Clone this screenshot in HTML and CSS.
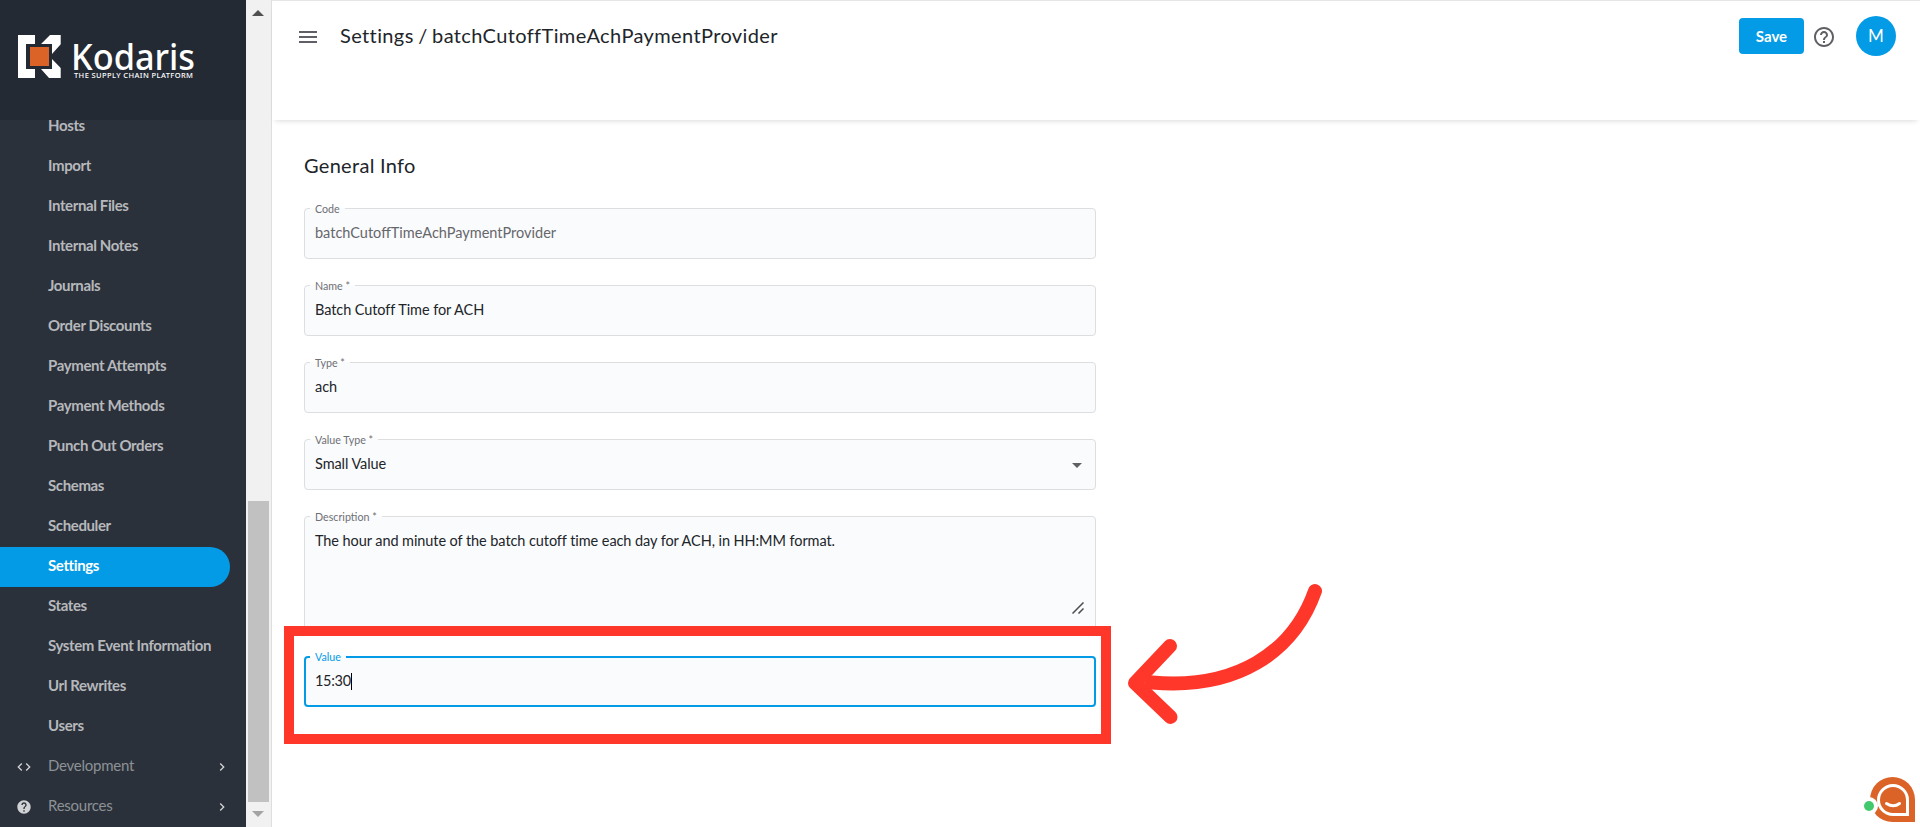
FILE: index.html
```
<!DOCTYPE html>
<html lang="en">
  <head>
    <meta charset="UTF-8" />
    <meta name="viewport" content="width=device-width, initial-scale=1.0" />
    <title>Settings / batchCutoffTimeAchPaymentProvider</title>
    <link rel="stylesheet" href="styles.css">
  </head>
  <body>
    <aside class="sidebar">
      <div class="brand">
        <svg class="logo" width="200" height="60" viewBox="0 0 200 60">
          <path fill="#fff" d="M0 2h17v9H8v25h9v9H0zM32 2h10.700v9.300L34 21v-10H23zM34 26l8.700 9V45H31L23 36h11z" />
          <path fill="#dc6328" d="M12 14h19v19H12z" />
          <text class="logo-name" x="53" y="36.500" textLength="124" lengthAdjust="spacingAndGlyphs">Kodaris</text>
          <text class="logo-tag" x="56" y="45" textLength="119">THE SUPPLY CHAIN PLATFORM</text>
        </svg>
      </div>
      <nav class="menu">
        <a href="#">Hosts</a>
        <a href="#">Import</a>
        <a href="#">Internal Files</a>
        <a href="#">Internal Notes</a>
        <a href="#">Journals</a>
        <a href="#">Order Discounts</a>
        <a href="#">Payment Attempts</a>
        <a href="#">Payment Methods</a>
        <a href="#">Punch Out Orders</a>
        <a href="#">Schemas</a>
        <a href="#">Scheduler</a>
        <a href="#" class="active">Settings</a>
        <a href="#">States</a>
        <a href="#">System Event Information</a>
        <a href="#">Url Rewrites</a>
        <a href="#">Users</a>
        <a href="#" class="group">
          <svg class="group-icon" width="16" height="16" viewBox="0 0 24 24"><path d="M9.400 16.600 4.800 12l4.600-4.600L8 6l-6 6 6 6 1.400-1.400zm5.200 0 4.600-4.600-4.600-4.600L16 6l6 6-6 6-1.400-1.400z" /></svg>
          <span>Development</span>
          <svg class="chevron" width="16" height="16" viewBox="0 0 24 24"><path d="M10 6 8.590 7.410 13.170 12l-4.580 4.590L10 18l6-6z" /></svg>
        </a>
        <a href="#" class="group">
          <svg class="group-icon" width="16" height="16" viewBox="0 0 24 24"><path d="M12 2C6.480 2 2 6.480 2 12s4.480 10 10 10 10-4.480 10-10S17.520 2 12 2zm1 17h-2v-2h2v2zm2.070-7.750-.9.920C13.450 12.900 13 13.500 13 15h-2v-.5c0-1.100.45-2.100 1.170-2.830l1.240-1.260c.37-.36.59-.86.59-1.410 0-1.100-.9-2-2-2s-2 .9-2 2H8c0-2.210 1.790-4 4-4s4 1.790 4 4c0 .88-.36 1.680-.93 2.250z" /></svg>
          <span>Resources</span>
          <svg class="chevron" width="16" height="16" viewBox="0 0 24 24"><path d="M10 6 8.590 7.410 13.170 12l-4.580 4.590L10 18l6-6z" /></svg>
        </a>
      </nav>
    </aside>

    <div class="scrollbar">
      <svg width="12" height="6" viewBox="0 0 12 6"><path fill="#505050" d="M0 6h12L6 0z" /></svg>
      <div class="thumb"></div>
      <svg width="12" height="6" viewBox="0 0 12 6"><path fill="#a3a3a3" d="M0 0h12L6 6z" /></svg>
    </div>

    <main>
      <header class="topbar">
        <svg width="24" height="24" viewBox="0 0 24 24"><path d="M3 18h18v-2H3v2zm0-5h18v-2H3v2zm0-7v2h18V6H3z" /></svg>
        <h1>Settings / batchCutoffTimeAchPaymentProvider</h1>
        <button type="button" class="save">Save</button>
        <svg class="help" width="24" height="24" viewBox="0 0 24 24"><path d="M11 18h2v-2h-2v2zm1-16C6.480 2 2 6.480 2 12s4.480 10 10 10 10-4.480 10-10S17.520 2 12 2zm0 18c-4.410 0-8-3.590-8-8s3.590-8 8-8 8 3.590 8 8-3.590 8-8 8zm0-14c-2.210 0-4 1.790-4 4h2c0-1.100.9-2 2-2s2 .9 2 2c0 2-3 1.750-3 5h2c0-2.250 3-2.500 3-5 0-2.210-1.790-4-4-4z" /></svg>
        <div class="avatar">M</div>
      </header>

      <form class="form">
        <h2>General Info</h2>
        <fieldset class="disabled">
          <legend>Code</legend>
          <div class="value">batchCutoffTimeAchPaymentProvider</div>
        </fieldset>
        <fieldset>
          <legend>Name *</legend>
          <div class="value">Batch Cutoff Time for ACH</div>
        </fieldset>
        <fieldset>
          <legend>Type *</legend>
          <div class="value">ach</div>
        </fieldset>
        <fieldset>
          <legend>Value Type *</legend>
          <div class="value select">
            <span>Small Value</span>
            <svg width="10" height="5" viewBox="0 0 10 5"><path fill="#5f6063" d="M0 0h10L5 5z" /></svg>
          </div>
        </fieldset>
        <fieldset class="area">
          <legend>Description *</legend>
          <div class="value">The hour and minute of the batch cutoff time each day for ACH, in HH:MM format.</div>
          <svg class="resize" width="12" height="12" viewBox="0 0 12 12"><path d="M.5 11.500l11-11M6.500 11.500l5-5" /></svg>
        </fieldset>
        <div class="highlight">
          <fieldset class="focused">
            <legend>Value</legend>
            <div class="value">15:30<span class="caret"></span></div>
          </fieldset>
          <svg class="arrow" width="200" height="150" viewBox="0 0 200 150">
            <path d="M192 16C170 78 113 115 29 107.500" />
            <path d="M47 71 12 108l35.500 34" />
          </svg>
        </div>
      </form>
    </main>

    <svg class="chat" width="52" height="46" viewBox="0 0 52 46">
      <path fill="#dc6328" d="M28.500 0A22.500 22.500 0 0 1 51 22.500V45H28.500A22.500 22.500 0 0 1 28.500 0z" />
      <circle cx="5" cy="29" r="9" fill="#fff" />
      <circle cx="5" cy="29" r="5" fill="#43c96d" />
      <path fill="#dc6328" stroke="#fff" stroke-width="3" d="M29 8.500A14.500 14.500 0 0 1 43.500 23v14.500H29a14.500 14.500 0 0 1 0-29z" />
      <path fill="none" stroke="#fff" stroke-width="3" stroke-linecap="round" d="M22.500 26.500q7 4.500 13 0" />
    </svg>
  </body>
</html>
```
FILE: styles.css
```
* {
  margin: 0;
  padding: 0;
  box-sizing: border-box;
}
body {
  display: flex;
  height: 827px;
  overflow: hidden;
  font-family: Lato, sans-serif;
  font-size: 14.5px;
  color: #212529;
  background-color: #fff;
}
.sidebar {
  display: flex;
  flex-direction: column;
  justify-content: flex-end;
  width: 246px;
  background-color: #2b313b;
}
.brand {
  height: 120px;
  padding: 33px 0 0 18px;
  background-color: #242a33;
  flex: none;
  z-index: 1;
}
.logo {
  display: block;
  overflow: visible;
}
.logo-name {
  fill: #fff;
  font: 500 36px "Noto Sans", sans-serif;
}
.logo-tag {
  fill: #fff;
  font: 500 7.5px "Noto Sans", sans-serif;
}
.menu {
  margin-top: -13px;
}
.menu a {
  display: flex;
  align-items: center;
  height: 40px;
  margin-right: 16px;
  padding: 0 0 4px 48px;
  color: #b6b8bb;
  font-size: 15px;
  font-weight: 700;
  letter-spacing: -0.38px;
  text-decoration: none;
}
.menu a.active {
  color: #fff;
  background-color: #049be6;
  border-radius: 0 20px 20px 0;
}
.menu a.group {
  padding: 0 0 4px 16px;
  gap: 16px;
  color: #8d9196;
  font-weight: 400;
  letter-spacing: -0.25px;
}
.group svg {
  position: relative;
  top: 2px;
  fill: #d0d2d4;
}
.group .chevron {
  margin-left: auto;
}
.scrollbar {
  display: flex;
  flex-direction: column;
  align-items: center;
  justify-content: space-between;
  width: 26px;
  padding: 10px 1px 10px 0;
  background-color: #f1f1f1;
  border-right: 1px solid #dedede;
}
.thumb {
  width: 21px;
  height: 301px;
  margin: auto 0 9px;
  background-color: #c1c1c1;
}
main {
  flex: 1;
  border-top: 1px solid #e6e6e6;
}
.topbar {
  display: flex;
  align-items: center;
  height: 119px;
  padding: 0 24px 49px;
  box-shadow: 0 4px 5px -3px rgba(0, 0, 0, 0.14);
}
.topbar svg {
  position: relative;
  top: 1px;
  fill: #5f5f65;
}
h1 {
  flex: 1;
  margin-left: 20px;
  padding-bottom: 2px;
  font-size: 20px;
  font-weight: 400;
  letter-spacing: 0.38px;
  word-spacing: -1px;
}
.save {
  width: 65px;
  height: 36px;
  padding-bottom: 1px;
  border: none;
  border-radius: 4px;
  background-color: #049be6;
  color: #fff;
  font: 700 15px Lato, sans-serif;
}
.help {
  margin: 0 20px 0 8px;
}
.avatar {
  width: 40px;
  height: 40px;
  border-radius: 50%;
  background-color: #049be6;
  color: #fff;
  font-size: 17px;
  line-height: 40px;
  text-align: center;
}
.form {
  width: 824px;
  padding: 31px 0 0 32px;
}
h2 {
  height: 51px;
  font-size: 20px;
  font-weight: 400;
  letter-spacing: 0.3px;
  line-height: 28px;
}
fieldset {
  height: 57px;
  margin-bottom: 20px;
  padding: 0 13px 0 5px;
  border: 1px solid #dcdee0;
  border-radius: 4px;
  background-color: #fafbfd;
}
legend {
  height: 13px;
  padding: 0 5px;
  color: #6f7074;
  font-size: 10.7px;
  line-height: 14px;
}
.value {
  height: 22px;
  margin-top: 7px;
  padding-left: 5px;
  letter-spacing: -0.08px;
  line-height: 22px;
}
.disabled .value {
  color: #66676b;
  letter-spacing: 0;
}
.select {
  display: flex;
  align-items: center;
  justify-content: space-between;
}
.select svg {
  margin-top: 3px;
}
.area {
  height: 120px;
  padding-right: 11px;
}
.resize {
  display: block;
  margin: 50px 0 0 auto;
  stroke: #4c4c50;
  stroke-width: 1.5;
}
.highlight {
  position: relative;
}
.highlight::after {
  content: "";
  position: absolute;
  inset: -24px -15px -37px -20px;
  border: 10px solid #ff372b;
}
.focused {
  padding-left: 4px;
  border: 2px solid #049be6;
}
.focused legend {
  height: 14px;
  color: #049be6;
}
.focused .value {
  margin-top: 6px;
  letter-spacing: -0.3px;
}
.caret {
  display: inline-block;
  width: 1px;
  height: 17px;
  background-color: #000;
  vertical-align: -4px;
}
.arrow {
  position: absolute;
  left: 819px;
  top: -75px;
  fill: none;
  stroke: #ff372b;
  stroke-width: 14;
  stroke-linecap: round;
  stroke-linejoin: round;
}
.chat {
  position: fixed;
  right: 4px;
  bottom: 4px;
}
```
